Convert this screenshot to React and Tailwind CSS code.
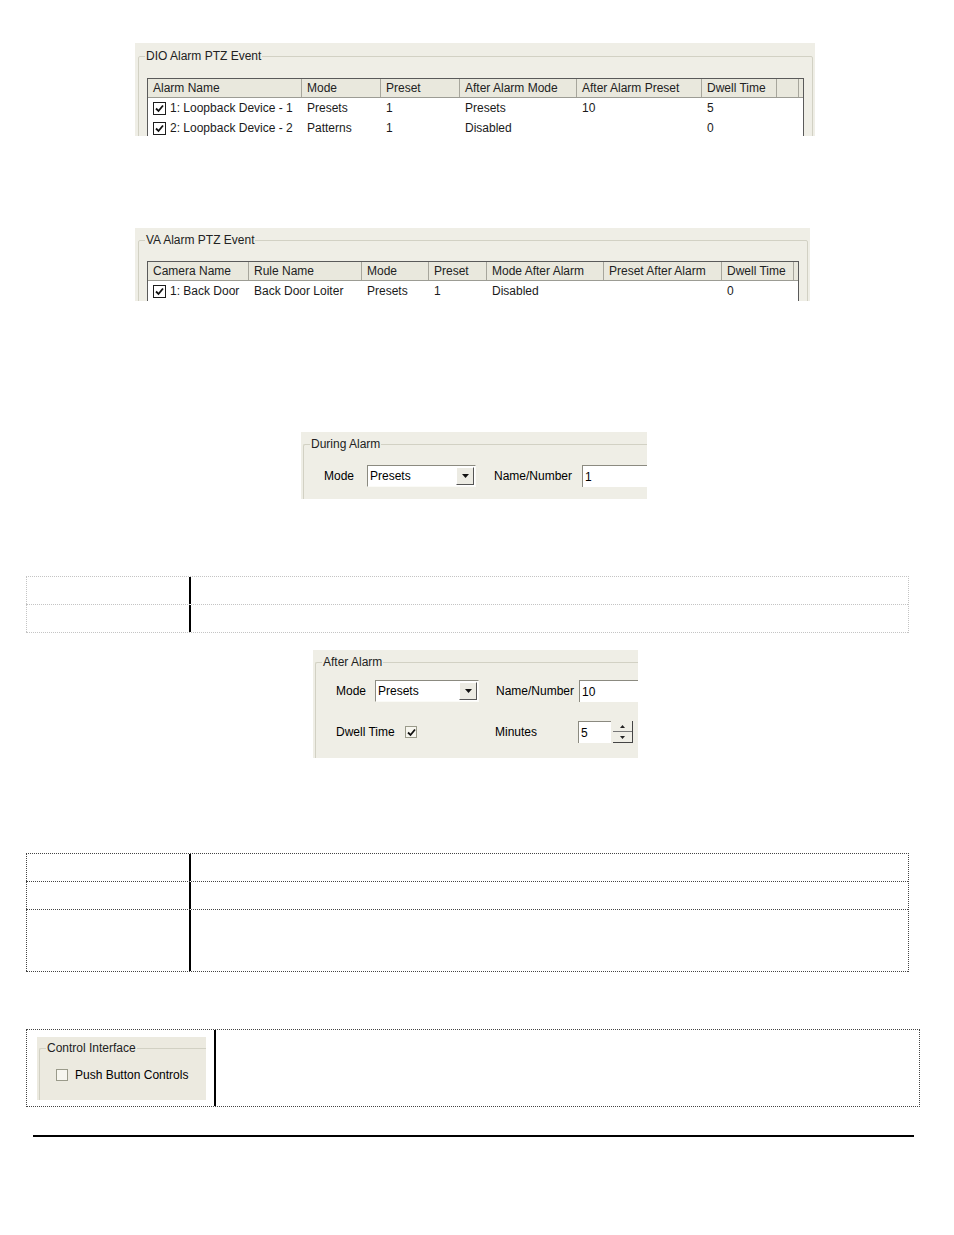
const font = { fontFamily: '"Liberation Sans", Arial, sans-serif' };

const Check = ({ checked = true, flat = false }) => (
  <span
    className={
      flat
        ? "inline-flex w-[12px] h-[12px] items-center justify-center border border-[#9a9a8a] bg-[#f7f6ef]"
        : "inline-flex w-[13px] h-[13px] items-center justify-center border border-[#1c1c1c] bg-white"
    }
  >
    {checked && (
      <svg width="9" height="9" viewBox="0 0 9 9">
        <path d="M1 4.5 L3.5 7 L8 1.5" stroke="#111" strokeWidth="1.8" fill="none" />
      </svg>
    )}
  </span>
);

const dioCols = [
  { label: "Alarm Name", w: "w-[154px]" },
  { label: "Mode", w: "w-[79px]" },
  { label: "Preset", w: "w-[79px]" },
  { label: "After Alarm Mode", w: "w-[117px]" },
  { label: "After Alarm Preset", w: "w-[125px]" },
  { label: "Dwell Time", w: "w-[75px]" },
];

const dioRows = [
  ["1: Loopback Device - 1", "Presets", "1", "Presets", "10", "5"],
  ["2: Loopback Device - 2", "Patterns", "1", "Disabled", "", "0"],
];

const vaCols = [
  { label: "Camera Name", w: "w-[101px]" },
  { label: "Rule Name", w: "w-[113px]" },
  { label: "Mode", w: "w-[67px]" },
  { label: "Preset", w: "w-[58px]" },
  { label: "Mode After Alarm", w: "w-[117px]" },
  { label: "Preset After Alarm", w: "w-[118px]" },
  { label: "Dwell Time", w: "w-[72px]" },
];

const vaRows = [["1: Back Door", "Back Door Loiter", "Presets", "1", "Disabled", "", "0"]];

const ListView = ({ cols, rows, width }) => (
  <div className={`${width} bg-white border border-[#5a5a5a] overflow-hidden`}>
    <div className="flex h-[19px] bg-[#e9e8dd] border-b border-[#9c9c94]">
      {cols.map((c) => (
        <div
          key={c.label}
          className={`${c.w} shrink-0 flex items-center pl-[5px] border-r border-[#a7a69c] text-[#222] whitespace-nowrap`}
        >
          {c.label}
        </div>
      ))}
      <div className="w-[22px] shrink-0 border-r border-[#a7a69c]" />
    </div>
    {rows.map((r, i) => (
      <div key={i} className="flex h-[20px] items-center text-[#1a1a1a]">
        {r.map((v, j) => (
          <div key={j} className={`${cols[j].w} shrink-0 flex items-center gap-[4px] pl-[5px] whitespace-nowrap`}>
            {j === 0 && <Check />}
            {v}
          </div>
        ))}
      </div>
    ))}
  </div>
);

// group box: legend sits at the left border, the content gets its own padding
const Group = ({ title, children, className, inner }) => (
  <fieldset className={`border border-[#d2d1c4] rounded-[2px] ${className}`}>
    <legend className="ml-[6px] px-[1px] text-[#222]">{title}</legend>
    <div className={inner}>{children}</div>
  </fieldset>
);

const Select = ({ value, w }) => (
  <div className={`${w} h-[22px] flex items-center bg-white border border-t-[#8b8a80] border-l-[#8b8a80] border-b-[#fbfbf7] border-r-[#fbfbf7]`}>
    <span className="flex-1 pl-[2px]">{value}</span>
    <span className="w-[18px] h-[18px] mr-[1px] flex items-center justify-center bg-[#ecebe3] border border-t-[#fff] border-l-[#fff] border-b-[#555] border-r-[#555]">
      <svg width="7" height="4" viewBox="0 0 7 4">
        <path d="M0 0 H7 L3.5 4 Z" fill="#111" />
      </svg>
    </span>
  </div>
);

const TextBox = ({ value, w }) => (
  <div className={`${w} h-[22px] flex items-center pl-[2px] bg-white border-t border-l border-[#8b8a80]`}>{value}</div>
);

export default function App() {
  return (
    <div className="w-[954px] h-[1235px] bg-white text-[12px] flex flex-col" style={font}>
      {/* DIO Alarm PTZ Event */}
      <div className="mt-[43px] ml-[135px] w-[680px] h-[93px] overflow-hidden bg-[#efeee6] pt-[4px] px-[3px]">
        <Group title="DIO Alarm PTZ Event" className="h-[140px] pt-[13px]" inner="px-[8px]">
          <ListView cols={dioCols} rows={dioRows} width="w-[657px]" />
        </Group>
      </div>

      {/* VA Alarm PTZ Event */}
      <div className="mt-[92px] ml-[135px] w-[675px] h-[73px] overflow-hidden bg-[#efeee6] pt-[3px] px-[3px]">
        <Group title="VA Alarm PTZ Event" className="h-[120px] pt-[12px]" inner="px-[8px]">
          <ListView cols={vaCols} rows={vaRows} width="w-[652px]" />
        </Group>
      </div>

      {/* During Alarm */}
      <div className="mt-[131px] ml-[301px] w-[346px] h-[67px] overflow-hidden bg-[#efeee6] pt-[3px] pl-[2px]">
        <Group title="During Alarm" className="h-[90px] w-[360px] pt-[12px] border-r-0" inner="pl-[20px]">
          <div className="flex items-center">
            <span className="w-[43px]">Mode</span>
            <Select value="Presets" w="w-[109px]" />
            <span className="ml-[18px] w-[88px]">Name/Number</span>
            <TextBox value="1" w="w-[80px]" />
          </div>
        </Group>
      </div>

      {/* Table 1 */}
      <div className="mt-[77px] ml-[26px] w-[883px] border-t border-r border-dotted border-[#c4c4c4]">
        {[0, 1].map((i) => (
          <div key={i} className="flex h-[28px] border-b border-dotted border-[#c4c4c4]">
            <div className="w-[163px] border-l border-dotted border-[#c4c4c4]" />
            <div className="w-[2px] bg-black" />
            <div className="flex-1" />
          </div>
        ))}
      </div>

      {/* After Alarm */}
      <div className="mt-[17px] ml-[313px] w-[325px] h-[108px] overflow-hidden bg-[#efeee6] pt-[3px] pl-[2px]">
        <Group title="After Alarm" className="h-[130px] w-[340px] pt-[9px] border-r-0" inner="pl-[20px]">
          <div className="flex items-center">
            <span className="w-[39px]">Mode</span>
            <Select value="Presets" w="w-[104px]" />
            <span className="ml-[17px] w-[83px]">Name/Number</span>
            <TextBox value="10" w="w-[60px]" />
          </div>
          <div className="flex items-center mt-[19px]">
            <span className="w-[69px]">Dwell Time</span>
            <Check flat />
            <span className="ml-[78px] w-[83px]">Minutes</span>
            <TextBox value="5" w="w-[33px]" />
            <div className="ml-[2px] w-[20px] h-[22px] flex flex-col border-r border-b border-[#444]">
              <div className="flex-1 flex items-center justify-center border-b border-[#777]">
                <svg width="5" height="3" viewBox="0 0 5 3"><path d="M0 3 L2.5 0 L5 3 Z" fill="#222" /></svg>
              </div>
              <div className="flex-1 flex items-center justify-center">
                <svg width="5" height="3" viewBox="0 0 5 3"><path d="M0 0 H5 L2.5 3 Z" fill="#222" /></svg>
              </div>
            </div>
          </div>
        </Group>
      </div>

      {/* Table 2 */}
      <div className="mt-[95px] ml-[26px] w-[883px] border-t border-r border-dotted border-[#444]">
        {["h-[28px]", "h-[28px]", "h-[62px]"].map((h, i) => (
          <div key={i} className={`flex ${h} border-b border-dotted border-[#444]`}>
            <div className="w-[163px] border-l border-dotted border-[#444]" />
            <div className="w-[2px] bg-black" />
            <div className="flex-1" />
          </div>
        ))}
      </div>

      {/* Control Interface */}
      <div className="mt-[57px] ml-[26px] w-[894px] h-[78px] flex border border-dotted border-[#444]">
        <div className="w-[187px] pl-[10px] pt-[7px]">
          <div className="w-[169px] h-[63px] overflow-hidden bg-[#eceae0] pt-[2px] pl-[2px]">
            <Group title="Control Interface" className="h-[90px] w-[180px] pt-[9px] border-r-0" inner="pl-[16px]">
              <div className="flex items-center gap-[7px]">
                <Check checked={false} flat />
                <span>Push Button Controls</span>
              </div>
            </Group>
          </div>
        </div>
        <div className="w-[2px] bg-black" />
        <div className="flex-1" />
      </div>

      {/* rule */}
      <div className="mt-[28px] ml-[33px] w-[881px] h-[2px] bg-black" />
    </div>
  );
}
